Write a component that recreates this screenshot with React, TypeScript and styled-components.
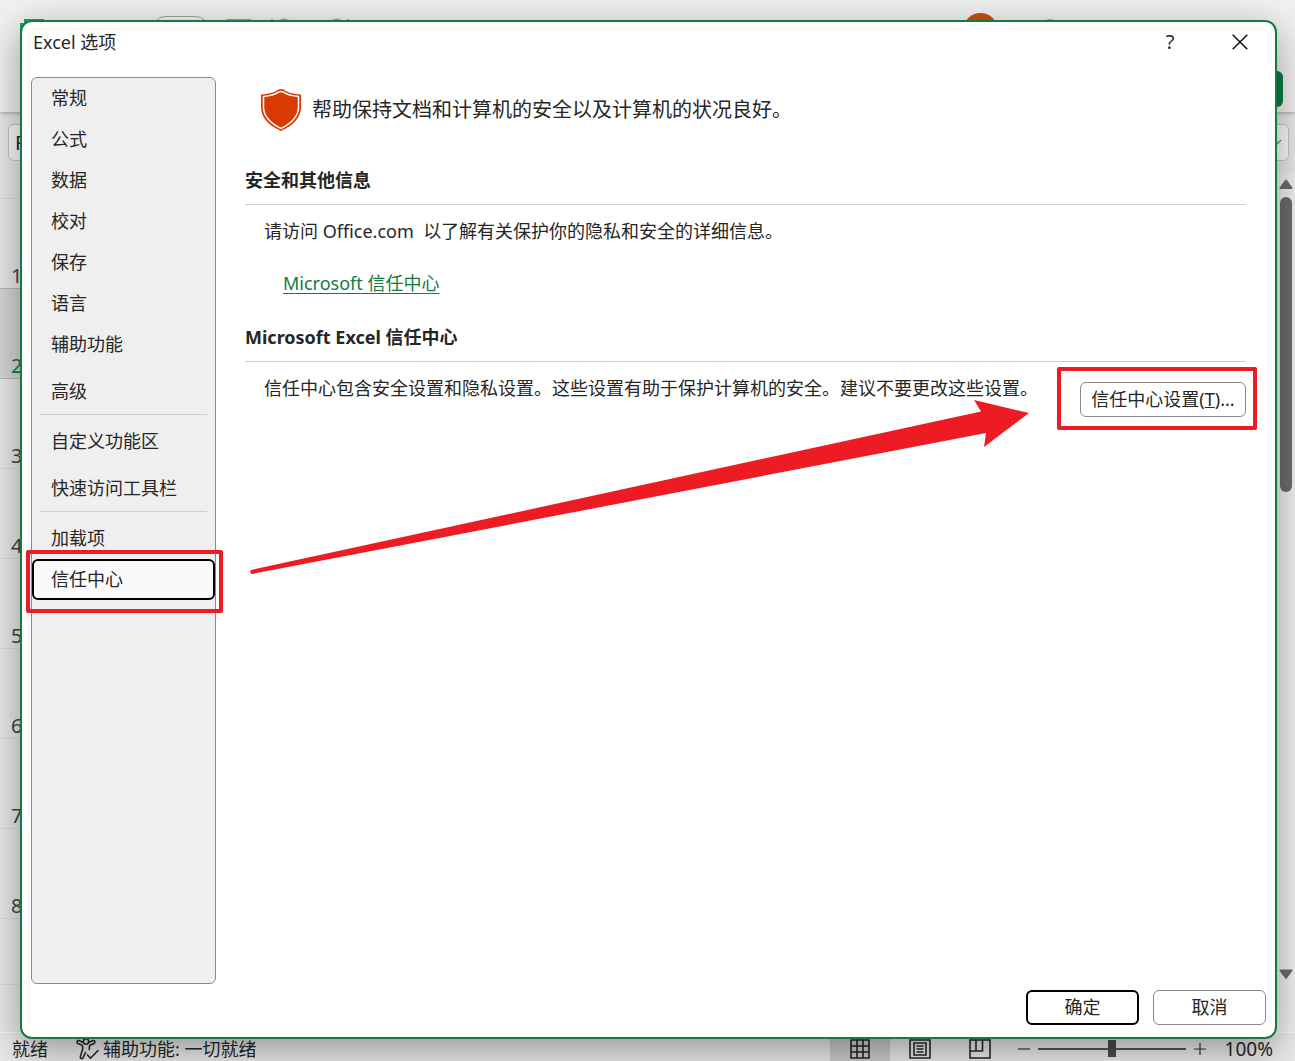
import React from "react";
import styled, { createGlobalStyle, css } from "styled-components";

const GREEN = "#107c41";
const INK = "#262626";
const RED = "#ed1c24";

const GlobalStyle = createGlobalStyle`
  * { box-sizing: border-box; }
  html, body { margin: 0; height: 100%; }
  body, button, input {
    font-family: "Noto Sans", "Noto Sans CJK SC", sans-serif;
    font-size: 18px;
    line-height: 24px;
    color: ${INK};
  }
  button { margin: 0; padding: 0; border: 0; background: none; cursor: pointer; }
  h1, h2, p { margin: 0; }
  svg { display: block; flex: none; }
`;

/* ---------- Workbook window ---------- */

const Workbook = styled.div`
  position: relative;
  display: flex;
  flex-direction: column;
  height: 100vh;
  min-height: 700px;
  overflow: hidden;
  background: #e9e9e9;
`;

const Ribbon = styled.header`
  display: flex;
  flex-direction: column;
  justify-content: space-between;
  height: 112px;
  padding-bottom: 5px;
  background: #f1f1f1;
  box-shadow: 0 1px 4px rgba(0, 0, 0, 0.3);
`;

const QuickBar = styled.div`
  display: flex;
  align-items: flex-start;
  padding: 13px 225px 0 20px;
`;

const QuickIcons = styled.div`
  display: flex;
  gap: 18px;
  flex: 1;
`;

const AccountIcons = styled.div`
  display: flex;
  gap: 46px;
`;

const Avatar = styled.div`
  width: 35px;
  height: 35px;
  border-radius: 50%;
  background: #ca5010;
`;

const ShareButton = styled.button`
  align-self: flex-end;
  width: 110px;
  height: 36px;
  margin-right: 12px;
  border-radius: 6px;
  background: ${GREEN};
`;

const FormulaRow = styled.div`
  display: flex;
  gap: 12px;
  height: 60px;
  padding: 12px 6px 11px 8px;
`;

const fieldBox = css`
  border: 1px solid #c4c4c4;
  border-radius: 6px;
  background: #fafafa;
`;

const NameBox = styled.input`
  ${fieldBox}
  width: 140px;
  padding: 0 6px;
  font-size: 20px;
`;

const FormulaBox = styled.div`
  ${fieldBox}
  display: flex;
  flex: 1;
  align-items: center;
  justify-content: flex-end;
  padding-right: 6px;
`;

const SheetArea = styled.div`
  display: flex;
  flex: 1;
  min-height: 0;
  justify-content: space-between;
`;

const RowHeaders = styled.ol`
  width: 34px;
  margin: 0;
  padding: 0;
  list-style: none;
  overflow: hidden;
`;

const HeaderCorner = styled.li`
  height: 27px;
  border-bottom: 1px solid #dcdcdc;
`;

const RowHeader = styled.li<{ $edge?: boolean; $selected?: boolean }>`
  display: flex;
  align-items: flex-end;
  height: 90px;
  padding-left: 11px;
  border-bottom: 1px solid ${(p) => (p.$edge ? "#b8b8b8" : "#dcdcdc")};
  background: ${(p) => (p.$selected ? "#d6d6d6" : "transparent")};
  color: ${(p) => (p.$selected ? GREEN : "#444")};
  font-size: 20px;
`;

const LastRowHeader = styled.li`
  height: 66px;
  border-bottom: 1px solid #dcdcdc;
`;

const ScrollTrack = styled.div`
  display: flex;
  flex-direction: column;
  align-items: center;
  gap: 7px;
  width: 18px;
  padding: 7px 0 52px;
  background: #f0f0f0;
`;

const ScrollThumb = styled.div`
  width: 12px;
  height: 295px;
  margin-bottom: auto;
  border-radius: 6px;
  background: #6c6c6c;
`;

const StatusBar = styled.footer`
  display: flex;
  align-items: center;
  justify-content: space-between;
  height: 29px;
  padding: 3px 22px 0 12px;
  border-top: 1px solid #f6f6f6;
  background: #e9e9e9;
`;

const StatusGroup = styled.div`
  display: flex;
  align-items: center;
`;

const AccessStatus = styled.span`
  display: flex;
  align-items: center;
  gap: 3px;
  margin-left: 28px;
`;

const ViewButton = styled.button<{ $active?: boolean }>`
  display: flex;
  align-items: center;
  justify-content: center;
  width: 60px;
  height: 28px;
  background: ${(p) => (p.$active ? "#cbcbcb" : "transparent")};
`;

const ZoomButton = styled.button`
  display: flex;
  align-items: center;
  justify-content: center;
  width: 28px;
`;

const ZoomSlider = styled.input`
  appearance: none;
  width: 148px;
  height: 18px;
  margin: 0;
  background: linear-gradient(#555, #555) center / 100% 2px no-repeat;
  &::-webkit-slider-thumb {
    appearance: none;
    width: 8px;
    height: 17px;
    background: #4c4c4c;
  }
`;

const ZoomValue = styled.output`
  margin-left: 11px;
  font-size: 19px;
`;

/* ---------- Options dialog ---------- */

const Dialog = styled.section`
  position: absolute;
  inset: 20px 18px 22px 20px;
  display: flex;
  flex-direction: column;
  border: 2px solid ${GREEN};
  border-radius: 12px;
  background: #fff;
  box-shadow: 0 10px 38px rgba(0, 0, 0, 0.38);
`;

const TitleBar = styled.div`
  display: flex;
  align-items: center;
  height: 40px;
  padding-left: 11px;
`;

const Title = styled.h1`
  flex: 1;
  font-size: 18px;
  font-weight: 400;
`;

const CaptionButton = styled.button`
  display: flex;
  align-items: center;
  justify-content: center;
  width: 70px;
  height: 40px;
  font-size: 20px;
`;

const DialogBody = styled.div`
  display: flex;
  flex: 1;
  min-height: 0;
  gap: 29px;
  padding: 15px 29px 6px 9px;
`;

const Nav = styled.nav`
  flex: none;
  width: 185px;
  border: 1px solid #8a8a8a;
  border-radius: 6px;
  background: #efefef;
`;

const NavItem = styled.button<{ $spaced?: boolean; $selected?: boolean }>`
  position: relative;
  display: block;
  width: 100%;
  height: 41px;
  margin-top: ${(p) => (p.$spaced ? 6 : 0)}px;
  padding: 0 ${(p) => (p.$selected ? 17 : 19)}px 2px;
  border: ${(p) => (p.$selected ? "2px solid #000" : "0")};
  border-radius: 6px;
  background: ${(p) => (p.$selected ? "#fafafa" : "transparent")};
  text-align: left;
`;

const NavDivider = styled.hr`
  height: 1px;
  margin: 2px 8px 0;
  border: 0;
  background: #cfcfcf;
`;

const Content = styled.main`
  flex: 1;
  min-width: 0;
`;

const Banner = styled.div`
  display: flex;
  align-items: center;
  gap: 11px;
  height: 66px;
  padding-left: 16px;
  font-size: 20px;
`;

const SectionHeading = styled.h2`
  margin-top: 25px;
  padding-bottom: 12px;
  border-bottom: 1px solid #cfcfcf;
  font-size: 18px;
  font-weight: 700;
  line-height: 24px;
`;

const SectionBody = styled.div`
  padding: 14px 0 5px 19px;
`;

const Paragraph = styled.p`
  white-space: pre-wrap;
`;

const TrustLink = styled.a`
  display: inline-block;
  margin: 28px 0 0 19px;
  color: ${GREEN};
  text-decoration: underline;
  text-underline-offset: 3px;
`;

const SettingsRow = styled.div`
  display: flex;
  align-items: flex-start;
  justify-content: space-between;
  gap: 20px;
`;

const PushButton = styled.button<{ $primary?: boolean }>`
  flex: none;
  width: 113px;
  height: 35px;
  padding-bottom: 2px;
  border: ${(p) => (p.$primary ? "2px solid #000" : "1px solid #8a8a8a")};
  border-radius: 6px;
  background: #fff;
`;

const SettingsButton = styled(PushButton)`
  position: relative;
  width: 166px;
  margin-top: 6px;
`;

const DialogFooter = styled.div`
  display: flex;
  justify-content: flex-end;
  gap: 14px;
  padding: 0 9px 12px;
`;

/* ---------- Annotations ---------- */

const Highlight = styled.span<{ $inset: string }>`
  position: absolute;
  inset: ${(p) => p.$inset};
  border: 4px solid ${RED};
  border-radius: 2px;
  pointer-events: none;
`;

const ArrowMark = styled.svg`
  position: absolute;
  left: 228px;
  top: 376px;
  pointer-events: none;
`;

/* ---------- Icons ---------- */

const Shield = () => (
  <svg width="40" height="42" viewBox="0 0 40 42" aria-hidden="true">
    <path
      d="M0 5.500C8 5 13 3.500 16.500 1Q20-.8 23.500 1C27 3.500 32 5 40 5.500V18C40 29 32 36.500 20 42C8 36.500 0 29 0 18Z"
      fill="#d83b01"
    />
    <path
      d="M2.500 7.500C9 7 14 5.500 17.500 3.200Q20 1.800 22.500 3.200C26 5.500 31 7 37.500 7.500V18C37.500 27.500 31 34 20 39.500C9 34 2.500 27.500 2.500 18Z"
      fill="none"
      stroke="#fff"
      strokeWidth="1.500"
    />
  </svg>
);

const CloseIcon = () => (
  <svg width="16" height="16" viewBox="0 0 16 16" aria-hidden="true">
    <path d="M.7.7l14.600 14.600M15.300.7L.7 15.300" stroke="#111" strokeWidth="1.500" />
  </svg>
);

const ScrollArrow = ({ down }: { down?: boolean }) => (
  <svg width="14" height="11" viewBox="0 0 14 11" aria-hidden="true">
    <path
      d={down ? "M1.500 1.500H12.500L7 9Z" : "M1.500 9H12.500L7 1.500Z"}
      fill="#6c6c6c"
      stroke="#6c6c6c"
      strokeWidth="2"
      strokeLinejoin="round"
    />
  </svg>
);

const AccessIcon = () => (
  <svg width="24" height="22" viewBox="0 0 24 22" fill="none" stroke="#262626" strokeWidth="1.600" strokeLinecap="round" strokeLinejoin="round" aria-hidden="true">
    <circle cx="10" cy="3.500" r="2.700" />
    <path d="M7.300 4.500L3 2.600C1 2 .4 4.700 2 5.500L6 7.300C7 8 6.800 10 6.500 12L4.300 18.500C4 20.800 6.300 21.300 7 19.800L9.500 14.500" />
    <path d="M12.700 4.500L17 2.600C19 2 19.600 4.700 18 5.500L14 7.300C13 8 13.200 9.500 13.300 11.500" />
    <path d="M11.500 17L14.500 20.200L22 12.500" />
  </svg>
);

const NormalViewIcon = () => (
  <svg width="20" height="20" viewBox="0 0 20 20" fill="none" stroke="#262626" strokeWidth="1.600" aria-hidden="true">
    <path d="M1 1H19V19H1ZM1 7H19M1 13H19M7 1V19M13 1V19" />
  </svg>
);

const PageLayoutIcon = () => (
  <svg width="22" height="20" viewBox="0 0 22 20" fill="none" stroke="#262626" strokeWidth="1.600" aria-hidden="true">
    <path d="M1 1H21V19H1ZM5 4H17V16H5ZM7.500 7H14.500M7.500 10H14.500M7.500 13H14.500" />
  </svg>
);

const PageBreakIcon = () => (
  <svg width="22" height="20" viewBox="0 0 22 20" fill="none" stroke="#262626" strokeWidth="1.600" aria-hidden="true">
    <path d="M1 1H21V19H1ZM1 12H13.500V1M7 1V12" />
  </svg>
);

const ZoomSign = ({ plus }: { plus?: boolean }) => (
  <svg width="12" height="12" viewBox="0 0 12 12" stroke="#333" strokeWidth="1.200" aria-hidden="true">
    <path d={plus ? "M0 6H12M6 0V12" : "M0 6H12"} />
  </svg>
);

const QuickAccessIcons = () => (
  <svg width="340" height="28" viewBox="0 0 340 28" fill="none" stroke="#a0a0a0" aria-hidden="true">
    <path d="M4 6H24V28H0V10H4Z" fill="#21a366" stroke="none" />
    <rect x="132.500" y="3.500" width="56" height="26" rx="13" fill="#f4f4f4" />
    <path d="M207 6.500H231V27H207Z" fill="#c4c4c4" />
    <path d="M252 6V14M258 9Q264 4 270 9M311 9Q317 4 323 9M328 6V12" strokeWidth="2" />
  </svg>
);

const rows = [1, 2, 3, 4, 5, 6, 7, 8];
const selectedRow = 2;

type Entry = { label: string; spaced?: boolean; selected?: boolean; divider?: boolean };

const entries: Entry[] = [
  { label: "常规" },
  { label: "公式" },
  { label: "数据" },
  { label: "校对" },
  { label: "保存" },
  { label: "语言" },
  { label: "辅助功能" },
  { label: "高级", spaced: true, divider: true },
  { label: "自定义功能区", spaced: true },
  { label: "快速访问工具栏", spaced: true, divider: true },
  { label: "加载项", spaced: true },
  { label: "信任中心", selected: true },
];

export default function App() {
  return (
    <Workbook>
      <GlobalStyle />
      <Ribbon>
        <QuickBar>
          <QuickIcons>
            <QuickAccessIcons />
          </QuickIcons>
          <AccountIcons>
            <Avatar />
            <svg width="26" height="30" viewBox="0 0 26 30" fill="none" stroke="#a0a0a0" strokeWidth="2" aria-hidden="true">
              <circle cx="6" cy="13" r="6" />
            </svg>
          </AccountIcons>
        </QuickBar>
        <ShareButton aria-label="共享" />
      </Ribbon>
      <FormulaRow>
        <NameBox aria-label="名称框" defaultValue="F" />
        <FormulaBox>
          <svg width="14" height="10" viewBox="0 0 14 10" fill="none" stroke="#888" strokeWidth="1.500" aria-hidden="true">
            <path d="M1 2L7 8L13 2" />
          </svg>
        </FormulaBox>
      </FormulaRow>
      <SheetArea>
        <RowHeaders>
          <HeaderCorner />
          {rows.map((n) => (
            <RowHeader key={n} $selected={n === selectedRow} $edge={n === selectedRow || n === selectedRow - 1}>
              {n}
            </RowHeader>
          ))}
          <LastRowHeader />
        </RowHeaders>
        <ScrollTrack>
          <ScrollArrow />
          <ScrollThumb />
          <ScrollArrow down />
        </ScrollTrack>
      </SheetArea>
      <StatusBar>
        <StatusGroup>
          <span>就绪</span>
          <AccessStatus>
            <AccessIcon />
            辅助功能: 一切就绪
          </AccessStatus>
        </StatusGroup>
        <StatusGroup>
          <ViewButton $active aria-label="普通">
            <NormalViewIcon />
          </ViewButton>
          <ViewButton aria-label="页面布局">
            <PageLayoutIcon />
          </ViewButton>
          <ViewButton aria-label="分页预览">
            <PageBreakIcon />
          </ViewButton>
          <ZoomButton aria-label="缩小">
            <ZoomSign />
          </ZoomButton>
          <ZoomSlider type="range" aria-label="缩放" min={0} max={100} defaultValue={50} />
          <ZoomButton aria-label="放大">
            <ZoomSign plus />
          </ZoomButton>
          <ZoomValue>100%</ZoomValue>
        </StatusGroup>
      </StatusBar>

      <Dialog role="dialog" aria-labelledby="options-title">
        <TitleBar>
          <Title id="options-title">Excel 选项</Title>
          <CaptionButton aria-label="帮助">?</CaptionButton>
          <CaptionButton aria-label="关闭">
            <CloseIcon />
          </CaptionButton>
        </TitleBar>
        <DialogBody>
          <Nav>
            {entries.map((e) => (
              <React.Fragment key={e.label}>
                <NavItem $spaced={e.spaced} $selected={e.selected}>
                  {e.label}
                  {e.selected && <Highlight $inset="-11px -10px -15px -8px" />}
                </NavItem>
                {e.divider && <NavDivider />}
              </React.Fragment>
            ))}
          </Nav>
          <Content>
            <Banner>
              <Shield />
              <p>帮助保持文档和计算机的安全以及计算机的状况良好。</p>
            </Banner>
            <SectionHeading>安全和其他信息</SectionHeading>
            <SectionBody>
              <Paragraph>请访问 Office.com{"  "}以了解有关保护你的隐私和安全的详细信息。</Paragraph>
              <TrustLink href="#trust-center">Microsoft 信任中心</TrustLink>
            </SectionBody>
            <SectionHeading>Microsoft Excel 信任中心</SectionHeading>
            <SectionBody>
              <SettingsRow>
                <Paragraph>信任中心包含安全设置和隐私设置。这些设置有助于保护计算机的安全。建议不要更改这些设置。</Paragraph>
                <SettingsButton>
                  信任中心设置(<u>T</u>)...
                  <Highlight $inset="-16px -12px -14px -24px" />
                </SettingsButton>
              </SettingsRow>
            </SectionBody>
          </Content>
        </DialogBody>
        <DialogFooter>
          <PushButton $primary>确定</PushButton>
          <PushButton>取消</PushButton>
        </DialogFooter>
        <ArrowMark width="780" height="180" viewBox="250 398 780 180" aria-hidden="true">
          <path d="M251 570L981 411.500L974 400L1029 413L984 447L986 433L252 574Q249 573 251 570Z" fill={RED} />
        </ArrowMark>
      </Dialog>
    </Workbook>
  );
}
